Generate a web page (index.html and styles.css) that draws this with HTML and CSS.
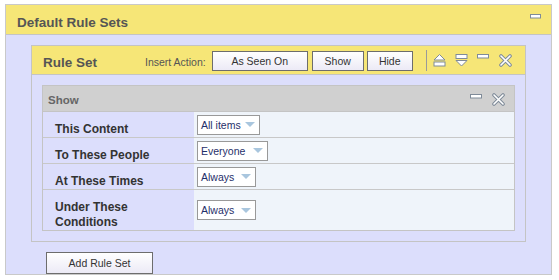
FILE: index.html
```html
<!DOCTYPE html>
<html lang="en">
<head>
  <meta charset="UTF-8">
  <title>Default Rule Sets</title>
  <link rel="stylesheet" href="styles.css">
</head>
<body>

  <div class="outer">
    <div class="outer-head">
      <span class="outer-title">Default Rule Sets</span>
      <svg class="ico-min outer-min" width="11" height="5" viewBox="0 0 11 5"><rect x="0.5" y="0.5" width="10" height="3.5" fill="#fff" stroke="#7f8b99"/></svg>
    </div>

    <div class="ruleset">
      <div class="ruleset-head">
        <span class="ruleset-title">Rule Set</span>
        <span class="insert-label">Insert Action:</span>
        <button class="btn btn-seen">As Seen On</button>
        <button class="btn btn-show">Show</button>
        <button class="btn btn-hide">Hide</button>
        <span class="divider"></span>
        <svg class="ico" width="13" height="13" viewBox="0 0 13 13">
          <polygon points="6.5,0.5 12,6 1,6" fill="#fff" stroke="#7f8b99"/>
          <rect x="1" y="8" width="11" height="4" fill="#fff" stroke="#7f8b99"/>
        </svg>
        <svg class="ico" width="13" height="13" viewBox="0 0 13 13">
          <rect x="1" y="0.5" width="11" height="4" fill="#fff" stroke="#7f8b99"/>
          <polygon points="1,6.5 12,6.5 6.5,12" fill="#fff" stroke="#7f8b99"/>
        </svg>
        <svg class="ico ico-bar" width="13" height="5" viewBox="0 0 13 5">
          <rect x="0.5" y="0.5" width="11" height="3.5" fill="#fff" stroke="#7f8b99"/>
        </svg>
        <svg class="ico" width="13" height="13" viewBox="0 0 13 13">
          <path d="M2,2 L11,11 M11,2 L2,11" stroke="#7f8b99" stroke-width="3.6" stroke-linecap="round"/>
          <path d="M2,2 L11,11 M11,2 L2,11" stroke="#fff" stroke-width="1.6" stroke-linecap="round"/>
        </svg>
      </div>

      <div class="rule-body">
        <div class="show-panel">
          <div class="show-head">
            <span class="show-title">Show</span>
            <svg class="ico ico-bar" width="13" height="5" viewBox="0 0 13 5">
              <rect x="0.5" y="0.5" width="11" height="3.5" fill="#fff" stroke="#7f8b99"/>
            </svg>
            <svg class="ico" width="13" height="13" viewBox="0 0 13 13">
              <path d="M2,2 L11,11 M11,2 L2,11" stroke="#7f8b99" stroke-width="3.6" stroke-linecap="round"/>
              <path d="M2,2 L11,11 M11,2 L2,11" stroke="#fff" stroke-width="1.6" stroke-linecap="round"/>
            </svg>
          </div>
          <table class="rules">
            <tr>
              <td class="label">This Content</td>
              <td class="value"><span class="dd dd-items">All items <i class="tri"></i></span></td>
            </tr>
            <tr>
              <td class="label">To These People</td>
              <td class="value"><span class="dd dd-people">Everyone <i class="tri"></i></span></td>
            </tr>
            <tr>
              <td class="label">At These Times</td>
              <td class="value"><span class="dd dd-always">Always <i class="tri"></i></span></td>
            </tr>
            <tr>
              <td class="label">Under These Conditions</td>
              <td class="value"><span class="dd dd-always">Always <i class="tri"></i></span></td>
            </tr>
          </table>
        </div>
      </div>
    </div>

    <button class="btn btn-add">Add Rule Set</button>
  </div>

</body>
</html>
```

FILE: styles.css
```css
body {
  margin: 0;
  padding: 4px 6px 0 5px;
  font-family: "Liberation Sans", Arial, sans-serif;
  background: #fff;
}

.outer {
  width: 547px;
  height: 271px;
  box-sizing: border-box;
  border: 1px solid #c9c9c9;
  background: #dcdefc;
}

.outer-head {
  height: 30px;
  box-sizing: border-box;
  background: #f6e677;
  border-bottom: 1px solid #c4c4c4;
  padding: 10px 10px 0 11px;
  display: flex;
  align-items: flex-start;
}

.outer-title {
  font-size: 13.5px;
  font-weight: bold;
  color: #555;
  line-height: 16px;
  flex: 1;
}

.outer-min {
  margin-top: -1px;
}

.ruleset {
  margin: 10px 25px 0 25px;
  border: 1px solid #c4c4c4;
}

.ruleset-head {
  height: 29px;
  box-sizing: border-box;
  background: #f6e677;
  border-bottom: 1px solid #c4c4c4;
  padding: 0 0 0 11px;
  display: flex;
  align-items: center;
}

.ruleset-title {
  font-size: 13.5px;
  font-weight: bold;
  color: #555;
  line-height: 16px;
  padding-top: 5px;
  width: 102px;
}

.insert-label {
  font-size: 10.5px;
  color: #555;
  padding-top: 3px;
  margin-right: 6px;
}

.btn {
  font-family: "Liberation Sans", Arial, sans-serif;
  font-size: 10.5px;
  color: #333;
  height: 20px;
  padding: 0;
  border: 1px solid #6d6d6d;
  background: linear-gradient(#ffffff, #eceaf6);
  margin-top: 1px;
}

.btn-seen { width: 96px; margin-right: 4px; }
.btn-show { width: 52px; margin-right: 3px; }
.btn-hide { width: 46px; }

.divider {
  width: 1px;
  height: 21px;
  background: #9a9a9a;
  margin: 0 6px 0 13px;
}

.ico {
  display: block;
  margin-right: 9px;
}

.ico-bar {
  align-self: flex-start;
  margin-top: 8px;
}

.rule-body {
  padding: 10px;
}

.show-panel {
  border: 1px solid #c4c4c4;
}

.show-head {
  height: 26px;
  box-sizing: border-box;
  background: #d0d0d0;
  border-bottom: 1px solid #c4c4c4;
  padding: 7px 0 0 5px;
  display: flex;
  align-items: flex-start;
}

.show-title {
  flex: 1;
  font-size: 11.5px;
  font-weight: bold;
  color: #666;
  line-height: 14px;
}

.show-head .ico-bar {
  margin-top: 1px;
}

.show-head .ico {
  margin-right: 9px;
}

.rules {
  width: 100%;
  border-collapse: collapse;
}

.rules td {
  border-top: 1px solid #c8c8c8;
  padding: 0;
}

.rules tr:first-child td {
  border-top: none;
}

.label {
  width: 151px;
  box-sizing: border-box;
  background: #dcdefc;
  padding: 10px 10px 0 12px !important;
  font-size: 12px;
  font-weight: bold;
  color: #333;
  line-height: 15px;
}

.value {
  background: #eff4fa;
  padding-left: 3px !important;
  vertical-align: middle;
}

.dd {
  display: inline-flex;
  align-items: center;
  justify-content: space-between;
  white-space: nowrap;
  height: 20px;
  box-sizing: border-box;
  border: 1px solid #999;
  background: #fff;
  padding: 0 4px 0 3px;
  font-size: 10.5px;
  color: #1f2f6a;
  vertical-align: middle;
}

.dd-items { width: 63px; }
.dd-people { width: 71px; }
.dd-always { width: 59px; }

.tri {
  flex: none;
  width: 0;
  height: 0;
  border-left: 5px solid transparent;
  border-right: 5px solid transparent;
  border-top: 5px solid #a9c6de;
  margin-left: 3px;
}

.btn-add {
  display: block;
  width: 107px;
  height: 22px;
  margin: 10px 0 0 40px;
}
```
